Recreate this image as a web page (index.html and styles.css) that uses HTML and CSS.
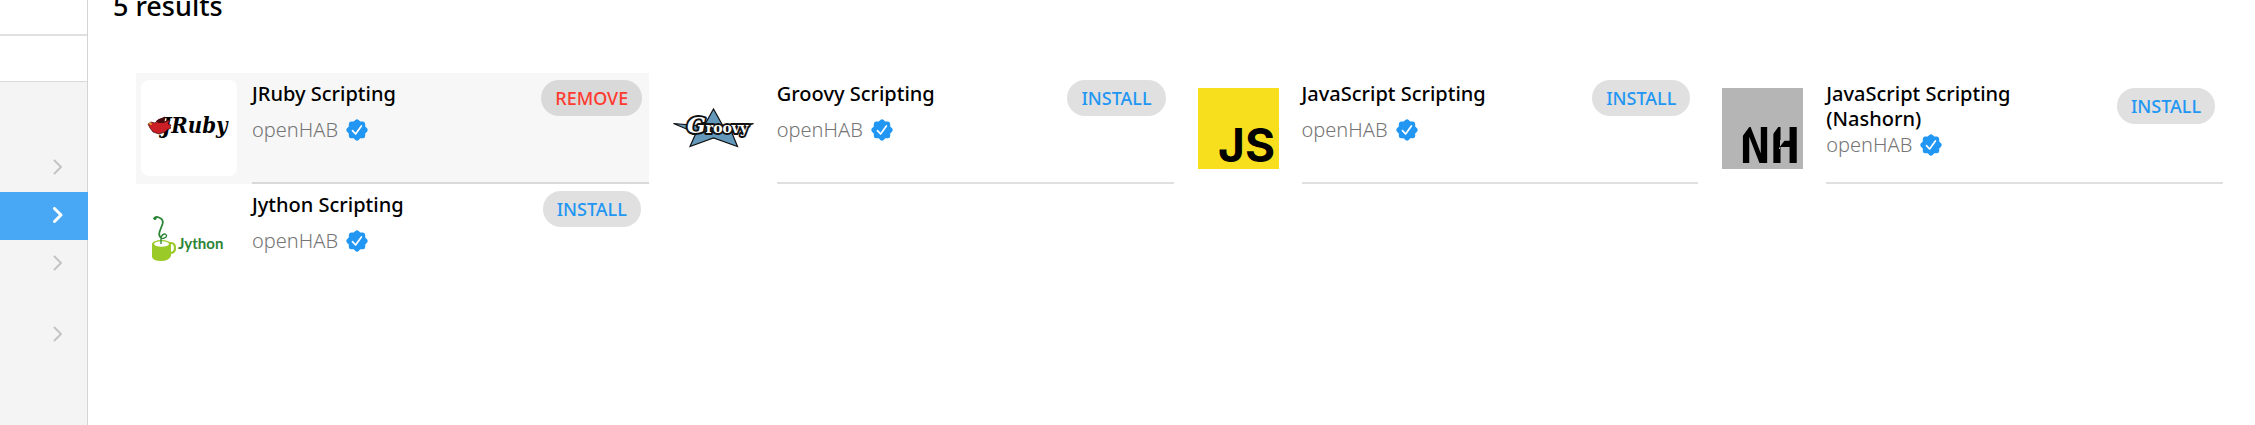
FILE: index.html
```html
<!DOCTYPE html>
<html lang="en">
<head>
<meta charset="utf-8">
<title>Add-on Store</title>
<link rel="stylesheet" href="styles.css">
</head>
<body>
<svg class="defs" aria-hidden="true">
  <symbol id="chevron" viewBox="0 0 10 16"><path d="M1.5 1.5 8 8l-6.500 6.500" fill="none" stroke="currentColor" stroke-linecap="round" stroke-linejoin="round"/></symbol>
  <symbol id="verified" viewBox="0 0 22 22">
    <path d="M9.300 1Q11-.6 12.700 1L14.200 2.500H17Q19 2.600 19.200 5V7.500L21 9.300Q22.400 11 21 12.700L19.200 14.500V17Q19 19.200 17 19.300H14.200L12.700 21Q11 22.500 9.300 21L7.800 19.300H5Q3 19.200 2.800 17V14.500L1 12.700Q-.4 11 1 9.300L2.800 7.500V5Q3 2.600 5 2.500H7.800Z" fill="#2196f3"/>
    <path d="M6.500 11.700 9.600 15 15.400 7" fill="none" stroke="#fff" stroke-width="1.700" stroke-linecap="round" stroke-linejoin="round"/>
  </symbol>
</svg>
<div class="app">
  <nav class="sidebar" aria-label="Main menu">
    <div class="brand"></div>
    <div class="brand-sub"></div>
    <div class="menu">
      <a class="item" href="#settings" aria-label="Settings"><svg class="chevron"><use href="#chevron"/></svg></a>
      <a class="item active" href="#store" aria-label="Add-on Store" aria-current="page"><svg class="chevron"><use href="#chevron"/></svg></a>
      <a class="item" href="#developer" aria-label="Developer Tools"><svg class="chevron"><use href="#chevron"/></svg></a>
      <a class="item separate" href="#help" aria-label="Help"><svg class="chevron"><use href="#chevron"/></svg></a>
    </div>
  </nav>
  <main class="content">
    <h1 class="heading">5 results</h1>
    <div class="cards">
      <article class="card hovered">
        <svg class="logo" viewBox="0 0 96 96" aria-hidden="true">
          <text class="logo-jruby" x="21" y="53">JRuby</text>
          <path d="m7 44 3-2 4 1 3-3 7-3-1 5 6-2-2 4 3 1-1 2 1 1-4 2-2 2-6 2-6-2-3-4Z" fill="#cc1f25" stroke="#3a090b" stroke-width=".7"/>
          <path d="m15 41 3-2 6-2-1 5 5-2-5 3-6 0Z" fill="#4a0a0e"/>
          <path d="m7 44 3-2 1 3Z" fill="#e0a436"/>
        </svg>
        <div class="body">
          <div class="head"><h2 class="title">JRuby Scripting</h2><div class="action"><button class="pill remove">REMOVE</button></div></div>
          <div class="author">openHAB <svg class="badge"><use href="#verified"/></svg></div>
        </div>
      </article>
      <article class="card">
        <svg class="logo" viewBox="0 0 96 96" aria-hidden="true">
          <path d="M7.500 43.500 38 46 47.500 29 57 46 87.500 43.500 66 53 71.500 66.500 47.500 58 24 66.500 30 53Z" fill="#6398bb" stroke="#111" stroke-width="1.200"/>
          <text class="logo-groovy" x="21" y="53"><tspan class="big">G</tspan>roovy</text>
        </svg>
        <div class="body">
          <div class="head"><h2 class="title">Groovy Scripting</h2><div class="action"><button class="pill">INSTALL</button></div></div>
          <div class="author">openHAB <svg class="badge"><use href="#verified"/></svg></div>
        </div>
      </article>
      <article class="card">
        <svg class="logo" viewBox="0 0 96 96" aria-hidden="true">
          <rect x="7" y="8" width="81" height="81" fill="#f7df1e"/>
          <text class="logo-js" x="27" y="82">JS</text>
        </svg>
        <div class="body">
          <div class="head"><h2 class="title">JavaScript Scripting</h2><div class="action"><button class="pill">INSTALL</button></div></div>
          <div class="author">openHAB <svg class="badge"><use href="#verified"/></svg></div>
        </div>
      </article>
      <article class="card">
        <svg class="logo" viewBox="0 0 96 96" aria-hidden="true">
          <rect x="7" y="8" width="81" height="81" fill="#b5b5b5"/>
          <text class="logo-nh" x="25" y="83">NH</text>
          <path d="M27 46v11l8-11ZM56 46v11l8-11ZM65 60v9h-1v-1l6-8Z" fill="#b5b5b5"/>
        </svg>
        <div class="body">
          <div class="head"><h2 class="title">JavaScript Scripting (Nashorn)</h2><div class="action"><button class="pill">INSTALL</button></div></div>
          <div class="author">openHAB <svg class="badge"><use href="#verified"/></svg></div>
        </div>
      </article>
      <article class="card last">
        <svg class="logo" viewBox="0 0 96 96" aria-hidden="true">
          <path d="M27 52h3q4 0 4 5t-5 5h-2" fill="none" stroke="#9aca28" stroke-width="2.200"/>
          <path d="M11 53v13q1 4 9 4t10-5V53Z" fill="#9aca28"/>
          <ellipse cx="20.500" cy="53" rx="9.500" ry="4" fill="#9aca28"/>
          <ellipse cx="20.500" cy="53" rx="7.500" ry="2.800" fill="#fff"/>
          <path d="M13 28q1-3 5-1.500 5 2 3.500 6.500l-3 8q-1 4 1.500 5.500" fill="none" stroke="#2c8435" stroke-width="1.800"/>
          <path d="M20 53v-6q1-4 4-4 2.500 1 1 3-2 2-5 1.500" fill="none" stroke="#2c8435" stroke-width="1.300"/>
          <circle cx="14" cy="27.500" r="1.600" fill="#2c8435"/>
          <text class="logo-jython" x="37" y="58">Jython</text>
        </svg>
        <div class="body">
          <div class="head"><h2 class="title">Jython Scripting</h2><div class="action"><button class="pill">INSTALL</button></div></div>
          <div class="author">openHAB <svg class="badge"><use href="#verified"/></svg></div>
        </div>
      </article>
    </div>
  </main>
</div>
</body>
</html>
```
FILE: styles.css
```css
* { box-sizing: border-box; }
body {
  margin: 0;
  background: #fff;
  color: #000;
  font-family: "Noto Sans", "Open Sans", sans-serif;
}
.defs { display: none; }
.app { display: flex; min-height: 100vh; }

.sidebar {
  display: flex;
  flex-direction: column;
  flex: 0 0 88px;
  border-right: 1px solid #d4d4d4;
}
.brand { height: 36px; border-bottom: 2px solid #e0e0e0; }
.brand-sub { height: 46px; border-bottom: 1px solid #d9d9d9; }
.menu { flex: 1; padding-top: 62px; background: #f4f4f4; }
.item {
  display: flex;
  align-items: center;
  justify-content: flex-end;
  height: 48px;
  padding: 0 24px 2px 0;
  color: #c4c4c4;
}
.item.active {
  margin-right: -1px;
  padding-right: 25px;
  background: #48a8f5;
  color: #fff;
}
.item.separate { margin-top: 23px; }
.chevron { width: 10px; height: 16px; stroke-width: 2; }
.active .chevron { stroke-width: 3; }

.content { flex: 1; min-width: 0; padding: 0 32px 0 25px; }
.heading {
  margin: -12px 0 49px;
  font-size: 27px;
  line-height: 36px;
  font-weight: 500;
}
.cards {
  display: grid;
  grid-template-columns: repeat(4, minmax(0, 1fr));
  column-gap: 12px;
  padding-left: 23px;
}
.card { display: flex; gap: 15px; padding-left: 5px; }
.card.hovered { background: #f7f7f7; }
.logo {
  flex: none;
  width: 96px;
  height: 96px;
  margin: 7px 0 8px;
  border-radius: 8px;
  background: #fff;
}
.body {
  flex: 1;
  min-width: 0;
  padding: 7px 6px 0 0;
  border-bottom: 2px solid #e0e0e0;
}
.hovered .body { border-color: #d9d9d9; }
.last .body { border-color: transparent; }
.head { display: flex; gap: 15px; }
.title {
  flex: 1;
  margin: 0;
  padding-top: 1px;
  font-size: 20px;
  line-height: 25px;
  font-weight: 500;
}
.action {
  display: flex;
  justify-content: center;
  align-self: center;
  min-width: 102px;
}
.pill {
  height: 36px;
  padding: 0 14px;
  border: 0;
  border-radius: 18px;
  background: #e0e0e0;
  color: #2196f3;
  font-family: inherit;
  font-size: 18px;
  line-height: 36px;
  font-weight: 500;
}
.pill.remove { background: #d9d9d9; color: #ff3b30; }
.author {
  display: flex;
  align-items: center;
  gap: 8px;
  height: 28px;
  color: #757575;
  font-size: 20px;
  line-height: 28px;
  font-weight: 300;
}
.badge { width: 22px; height: 22px; }

.logo-jruby { font: italic bold 22px "DejaVu Serif Condensed", "DejaVu Serif", serif; }
.logo-groovy {
  font: bold 14px "DejaVu Serif", serif;
  fill: #fff;
  stroke: #111;
  stroke-width: 4px;
  stroke-linejoin: round;
  paint-order: stroke;
}
.logo-groovy .big { font-size: 22px; font-style: italic; }
.logo-js { font: bold 46px Inter, sans-serif; }
.logo-nh { font: bold 50px "DejaVu Sans Mono", monospace; }
.logo-jython { font: bold 15px Lato, sans-serif; fill: #2c8435; }
```
